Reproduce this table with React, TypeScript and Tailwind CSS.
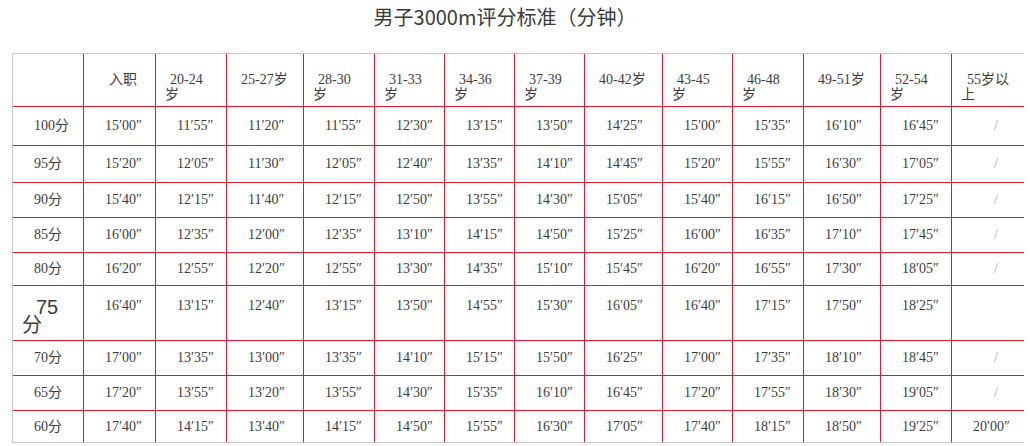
import React from "react";

const headers: { lines: string[]; indent?: string }[] = [
  { lines: [] },
  { lines: ["入职"], indent: "ml-[16px]" },
  { lines: ["20-24", "岁"] },
  { lines: ["25-27岁"] },
  { lines: ["28-30", "岁"] },
  { lines: ["31-33", "岁"] },
  { lines: ["34-36", "岁"] },
  { lines: ["37-39", "岁"] },
  { lines: ["40-42岁"] },
  { lines: ["43-45", "岁"] },
  { lines: ["46-48", "岁"] },
  { lines: ["49-51岁"] },
  { lines: ["52-54", "岁"] },
  { lines: ["55岁以", "上"], indent: "ml-[6px]" },
];

const rows: { label: string; vals: string[] }[] = [
  { label: "100分", vals: ["15'00", "11'55", "11'20", "11'55", "12'30", "13'15", "13'50", "14'25", "15'00", "15'35", "16'10", "16'45", "/"] },
  { label: "95分", vals: ["15'20", "12'05", "11'30", "12'05", "12'40", "13'35", "14'10", "14'45", "15'20", "15'55", "16'30", "17'05", "/"] },
  { label: "90分", vals: ["15'40", "12'15", "11'40", "12'15", "12'50", "13'55", "14'30", "15'05", "15'40", "16'15", "16'50", "17'25", "/"] },
  { label: "85分", vals: ["16'00", "12'35", "12'00", "12'35", "13'10", "14'15", "14'50", "15'25", "16'00", "16'35", "17'10", "17'45", "/"] },
  { label: "80分", vals: ["16'20", "12'55", "12'20", "12'55", "13'30", "14'35", "15'10", "15'45", "16'20", "16'55", "17'30", "18'05", "/"] },
  { label: "75分", vals: ["16'40", "13'15", "12'40", "13'15", "13'50", "14'55", "15'30", "16'05", "16'40", "17'15", "17'50", "18'25", ""] },
  { label: "70分", vals: ["17'00", "13'35", "13'00", "13'35", "14'10", "15'15", "15'50", "16'25", "17'00", "17'35", "18'10", "18'45", "/"] },
  { label: "65分", vals: ["17'20", "13'55", "13'20", "13'55", "14'30", "15'35", "16'10", "16'45", "17'20", "17'55", "18'30", "19'05", "/"] },
  { label: "60分", vals: ["17'40", "14'15", "13'40", "14'15", "14'50", "15'55", "16'30", "17'05", "17'40", "18'15", "18'50", "19'25", "20'00"] },
];

function fmt(v: string) {
  if (v === "/" || v === "") return v;
  return v.replace("'", "\u2032") + "\u2033";
}

export default function App() {
  return (
    <div className="w-[1035px] h-[446px] bg-white overflow-hidden text-[#3c3c3c] font-['Liberation_Serif','Noto_Sans_CJK_SC',serif]">
      <div className="w-[1010px] h-[53px] pt-[7px] text-center text-[20px] leading-[20px] text-[#3a3a3a] font-['Noto_Sans_CJK_SC',sans-serif]">
        男子3000m评分标准（分钟）
      </div>
      <div className="ml-[12px] w-[1012px] overflow-hidden">
        <div className="grid w-max grid-cols-[70px_71px_70px_76px_70px_69px_69px_69px_77px_69px_70px_76px_70px_80px] grid-rows-[52px_38px_36px_34px_34px_32px_54px_34px_34px_31px] gap-px bg-[#e5162d] border-l border-t border-b border-[#c8c8c8] text-[14px]">
          {headers.map((h, i) => (
            <div key={"h" + i} className="bg-white pt-[18px] pl-[9px] leading-[15px] whitespace-nowrap">
              {h.lines.map((l, j) => (
                <div key={j} className={j === 0 ? h.indent ?? "ml-[5px]" : ""}>
                  {l}
                </div>
              ))}
            </div>
          ))}
          {rows.map((r) =>
            r.label === "75分" ? (
              <React.Fragment key={r.label}>
                <div className="bg-white pt-[12px] pl-[9px] text-[20px] leading-[18px] font-['Liberation_Sans','Noto_Sans_CJK_SC',sans-serif]">
                  <div className="ml-[14px]">75</div>
                  <div>分</div>
                </div>
                {r.vals.map((v, j) => (
                  <div key={j} className="bg-white pt-[12px] pl-[21px] leading-[16px] whitespace-nowrap">
                    {fmt(v)}
                  </div>
                ))}
              </React.Fragment>
            ) : (
              <React.Fragment key={r.label}>
                <div className="bg-white flex items-center pl-[21px] leading-[16px] whitespace-nowrap">{r.label}</div>
                {r.vals.map((v, j) => (
                  <div
                    key={j}
                    className={
                      v === "/"
                        ? "bg-white flex items-center pl-[42px] leading-[16px] text-[#a8a8b8]"
                        : "bg-white flex items-center pl-[21px] leading-[16px] whitespace-nowrap"
                    }
                  >
                    {fmt(v)}
                  </div>
                ))}
              </React.Fragment>
            )
          )}
        </div>
      </div>
    </div>
  );
}
